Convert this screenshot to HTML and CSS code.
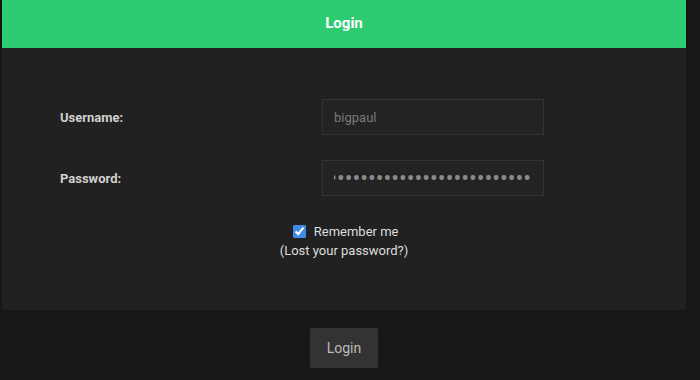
FILE: index.html
```html
<!DOCTYPE html>
<html lang="en">
<head>
    <meta charset="UTF-8">
    <title>Login</title>
    <link rel="stylesheet" href="styles.css">
</head>
<body>
    <div class="panel">
        <div class="panel-head">Login</div>
        <form class="panel-body">
            <div class="field">
                <label for="user">Username:</label>
                <input id="user" type="text" value="bigpaul">
            </div>
            <div class="field">
                <label for="pass">Password:</label>
                <input id="pass" class="secret" type="password" value="bigpaulbigpaulbigpaulbigpaulbigpaulbigpaul">
            </div>
            <div class="remember">
                <label><input type="checkbox" checked> Remember me</label>
                <a href="#">(Lost your password?)</a>
            </div>
        </form>
    </div>
    <div class="actions">
        <button type="button">Login</button>
    </div>
</body>
</html>
```

FILE: styles.css
```css
body {
    margin: 0;
    background: #171717;
    font-family: Roboto, "Liberation Sans", sans-serif;
    color: #ddd;
}
.panel {
    margin: 0 14px 0 2px;
    background: #212121;
}
.panel-head {
    height: 48px;
    line-height: 46px;
    background: #2ecc71;
    color: #fff;
    font-size: 15px;
    font-weight: bold;
    text-align: center;
}
.panel-body {
    padding: 51px 0 50px 58px;
}
.field {
    display: grid;
    grid-template-columns: 262px 222px;
    align-items: center;
    margin-bottom: 25px;
}
.field label {
    font-size: 13px;
    font-weight: bold;
    color: #d0d0d0;
}
.field input {
    box-sizing: border-box;
    height: 36px;
    padding: 0 11px;
    background: #232323;
    border: 1px solid #333;
    color: #7a7a7a;
    font-family: Roboto, "Liberation Sans", sans-serif;
    font-size: 13px;
    outline: none;
}
.field input.secret {
    direction: rtl;
    padding: 0 12px 0 11px;
    color: #8c8c8c;
    font-size: 23px;
}
.remember {
    margin-left: -58px;
    padding-top: 1px;
    text-align: center;
    font-size: 13px;
    line-height: 19px;
}
.remember label {
    display: block;
    color: #ddd;
}
.remember input {
    margin: 0 5px 0 3px;
    vertical-align: -2px;
    accent-color: #3d8be6;
}
.remember a {
    color: #ddd;
    text-decoration: none;
}
.actions {
    padding-top: 18px;
    padding-right: 12px;
    text-align: center;
}
.actions button {
    width: 68px;
    height: 40px;
    border: none;
    border-radius: 2px;
    background: #333;
    color: #bbb;
    font-family: Roboto, "Liberation Sans", sans-serif;
    font-size: 14px;
}
```
